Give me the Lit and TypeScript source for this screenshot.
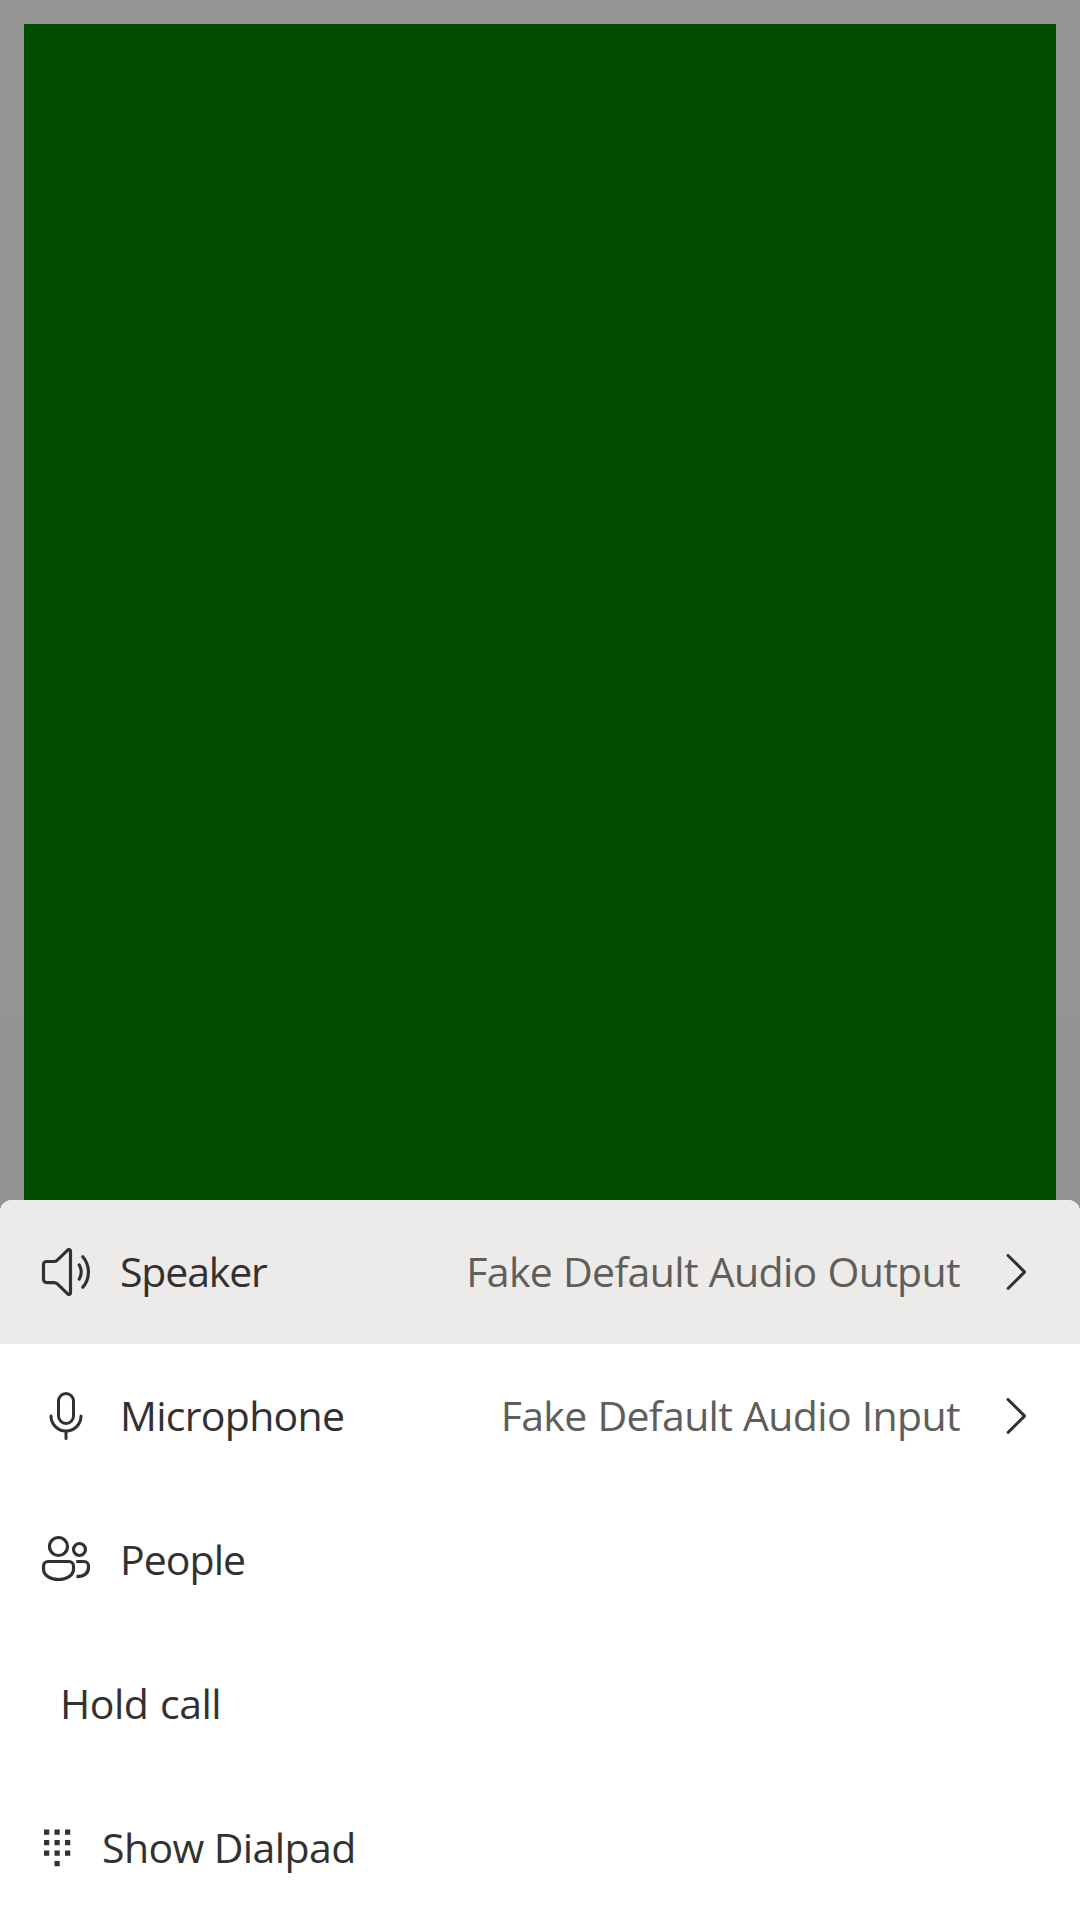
import { LitElement, html, css, svg, nothing } from "lit";
import { customElement } from "lit/decorators.js";

const speaker = svg`<g fill="none" stroke="currentColor" stroke-width="1.06" stroke-linecap="round" stroke-linejoin="round">
  <path d="M11.5 3v14a.5.5 0 0 1-.84.37L7.02 13.9a1.4 1.4 0 0 0-.95-.38H3.5a1 1 0 0 1-1-1V7.5a1 1 0 0 1 1-1h2.57c.35 0 .7-.14.95-.38l3.64-3.49A.5.5 0 0 1 11.5 3Z"/>
  <path d="M14.4 7.6c.85 1.5.85 3.3 0 4.8M15.6 4.9c2.5 2.9 2.5 7.3 0 10.2"/></g>`;
const microphone = svg`<path fill="currentColor" d="M10 13a3 3 0 0 0 3-3V5a3 3 0 0 0-6 0v5a3 3 0 0 0 3 3Zm0-1a2 2 0 0 1-2-2V5a2 2 0 1 1 4 0v5c0 1.1-.9 2-2 2ZM5 9.5c.28 0 .5.22.5.5a4.5 4.5 0 1 0 9 0 .5.5 0 0 1 1 0 5.5 5.5 0 0 1-5 5.48v2.02a.5.5 0 0 1-1 0v-2.02A5.5 5.5 0 0 1 4.5 10c0-.28.22-.5.5-.5Z"/>`;
const people = svg`<g fill="none" stroke="currentColor" stroke-width="1.06" stroke-linejoin="round">
  <circle cx="7.5" cy="5.5" r="3"/><circle cx="14.5" cy="6.5" r="2"/>
  <path d="M2.5 12c0-.83.67-1.5 1.5-1.5h7c.83 0 1.5.67 1.5 1.5v.9c0 2.3-2.2 3.6-5 3.6s-5-1.3-5-3.6Z"/>
  <path d="M13.4 10.5H16c.83 0 1.5.67 1.5 1.5v.3c0 2.1-1.5 3.2-4 3.25"/></g>`;
const chevron = svg`<path fill="currentColor" d="M7.65 4.15c.2-.2.5-.2.7 0l5.49 5.46c.21.22.21.57 0 .78l-5.49 5.46a.5.5 0 0 1-.7-.7L12.8 10 7.65 4.85a.5.5 0 0 1 0-.7Z"/>`;
const dots = [
  [0, 0], [1, 0], [2, 0],
  [0, 1], [1, 1], [2, 1],
  [0, 2], [1, 2], [2, 2],
  [1, 3],
];

interface Item {
  label: string;
  cls: string;
  icon?: unknown;
  dialpad?: boolean;
  value?: string;
}

const items: Item[] = [
  { label: "Speaker", cls: "speaker", icon: speaker, value: "Fake Default Audio Output" },
  { label: "Microphone", cls: "microphone", icon: microphone, value: "Fake Default Audio Input" },
  { label: "People", cls: "people", icon: people },
  { label: "Hold call", cls: "hold" },
  { label: "Show Dialpad", cls: "dial", dialpad: true },
];

@customElement("app-root")
export class AppRoot extends LitElement {
  static styles = css`
    :host {
      display: block;
    }
    .screen {
      box-sizing: border-box;
      height: 1920px;
      display: flex;
      flex-direction: column;
      background: linear-gradient(#969594 1017px, #949494 1017px);
      overflow: hidden;
      font-family: "Open Sans", "Noto Sans", sans-serif;
      color: #323130;
    }
    .stage {
      height: 1200px;
      flex: none;
      box-sizing: border-box;
      padding: 24px 24px 0;
      display: flex;
    }
    .video {
      flex: 1;
      background: #004c00;
    }
    .drawer {
      flex: none;
      height: 720px;
      background: #fff;
      border-radius: 12px 12px 0 0;
      overflow: hidden;
    }
    .row {
      box-sizing: border-box;
      height: 144px;
      padding: 0 36px;
      display: flex;
      align-items: center;
    }
    .row.speaker {
      background: #ecebe9;
    }
    .icon {
      width: 60px;
      height: 60px;
      flex: none;
      display: block;
    }
    .dialpad {
      width: 42px;
      height: 42px;
      flex: none;
      display: block;
    }
    .label,
    .value {
      font-size: 41px;
      line-height: 60px;
      padding-bottom: 2px;
      white-space: nowrap;
      letter-spacing: -0.6px;
    }
    .label {
      margin-left: 24px;
      flex: 1;
    }
    .speaker .label {
      letter-spacing: -1.15px;
    }
    .people .label {
      letter-spacing: -0.95px;
    }
    .microphone .label {
      letter-spacing: -0.7px;
    }
    .hold .label {
      letter-spacing: -0.5px;
      word-spacing: 1.6px;
    }
    .value {
      color: #605e5c;
      margin-right: 24px;
      letter-spacing: -0.65px;
      word-spacing: 0.8px;
    }
  `;

  private row(item: Item) {
    return html`<div class="row ${item.cls}">
      ${item.icon ? html`<svg class="icon" viewBox="0 0 20 20">${item.icon}</svg>` : nothing}
      ${item.dialpad
        ? html`<svg class="dialpad" viewBox="0 0 42 42">
            ${dots.map(([c, r]) => svg`<rect x=${8 + c * 10.5} y=${2.5 + r * 10.5} width="5.25" height="5.25" fill="currentColor"></rect>`)}
          </svg>`
        : nothing}
      <span class="label">${item.label}</span>
      ${item.value
        ? html`<span class="value">${item.value}</span>
            <svg class="icon" viewBox="0 0 20 20">${chevron}</svg>`
        : nothing}
    </div>`;
  }

  render() {
    return html`<div class="screen">
      <div class="stage"><div class="video"></div></div>
      <div class="drawer">${items.map((i) => this.row(i))}</div>
    </div>`;
  }
}
